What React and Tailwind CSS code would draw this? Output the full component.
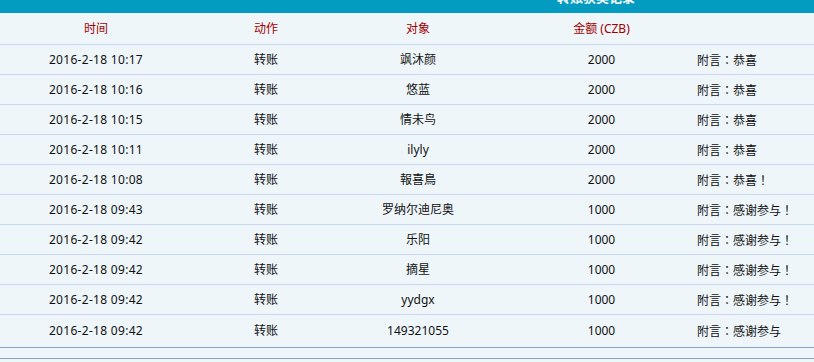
const rows = [
  { time: '2016-2-18 10:17', who: '飒沐颜', amount: '2000', note: '附言：恭喜' },
  { time: '2016-2-18 10:16', who: '悠蓝', amount: '2000', note: '附言：恭喜' },
  { time: '2016-2-18 10:15', who: '情未鸟', amount: '2000', note: '附言：恭喜' },
  { time: '2016-2-18 10:11', who: 'ilyly', amount: '2000', note: '附言：恭喜' },
  { time: '2016-2-18 10:08', who: '報喜鳥', amount: '2000', note: '附言：恭喜！' },
  { time: '2016-2-18 09:43', who: '罗纳尔迪尼奥', amount: '1000', note: '附言：感谢参与！' },
  { time: '2016-2-18 09:42', who: '乐阳', amount: '1000', note: '附言：感谢参与！' },
  { time: '2016-2-18 09:42', who: '摘星', amount: '1000', note: '附言：感谢参与！' },
  { time: '2016-2-18 09:42', who: 'yydgx', amount: '1000', note: '附言：感谢参与！' },
  { time: '2016-2-18 09:42', who: '149321055', amount: '1000', note: '附言：感谢参与' },
];

const cols = 'grid grid-cols-[192px_148px_156px_201px_1fr] items-center';

export default function App() {
  return (
    <div
      className="w-[814px] h-[362px] overflow-hidden bg-[#eef6fa] text-[12px] text-[#111]"
      style={{ fontFamily: '"Noto Sans", "Noto Sans CJK SC", sans-serif' }}
    >
      {/* 顶部标题栏（被裁掉一半） */}
      <div className="h-[13px] bg-[#039bc0] overflow-hidden">
        <div className="pl-[557px] -mt-[12px] text-white text-[13px] font-bold leading-[18px]">
          转账获奖记录
        </div>
      </div>

      <div className={`${cols} h-[32px] border-b border-[#c8d6f2] text-[#a10000]`}>
        <div className="text-center">时间</div>
        <div className="text-center">动作</div>
        <div className="text-center">对象</div>
        <div className="text-center pl-[10px]">金额 (CZB)</div>
        <div></div>
      </div>

      {rows.map((r, i) => (
        <div
          key={i}
          className={
            i === rows.length - 1
              ? `${cols} h-[33px] border-b border-[#86a3cc]`
              : `${cols} h-[30px] border-b border-[#c8d6f2]`
          }
        >
          <div className="text-center tracking-[0.3px]">{r.time}</div>
          <div className="text-center">转账</div>
          <div className="text-center">{r.who}</div>
          <div className="text-center pl-[10px]">{r.amount}</div>
          <div style={{ fontFamily: '"Noto Sans CJK JP", "Noto Sans CJK SC", sans-serif' }}>{r.note}</div>
        </div>
      ))}

      <div className="h-[11px] border-b border-[#86a3cc]"></div>
    </div>
  );
}
